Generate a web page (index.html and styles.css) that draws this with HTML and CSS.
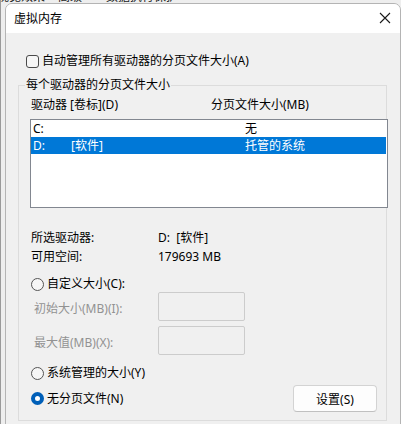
FILE: index.html
```html
<!DOCTYPE html>
<html lang="zh-CN">
<head>
<meta charset="utf-8">
<title>虚拟内存</title>
<link rel="stylesheet" href="styles.css">
</head>
<body>
<div class="desk">
  <div class="behind">
    <span class="bt bt1">视觉效果</span>
    <span class="bt bt2">高级</span>
    <span class="bt bt3">数据执行保护</span>
  </div>
  <div class="dialog">
    <div class="titlebar">
      <span class="title">虚拟内存</span>
      <svg class="close" width="12" height="12" viewBox="0 0 12 12"><path d="M1 1 L11 11 M11 1 L1 11" stroke="#1a1a1a" stroke-width="1.1" fill="none"/></svg>
    </div>
    <div class="body">
      <label class="check-row"><span class="checkbox"></span><span>自动管理所有驱动器的分页文件大小(A)</span></label>
      <div class="group">
        <span class="legend">每个驱动器的分页文件大小</span>
        <div class="headers"><span class="h1">驱动器 [卷标](D)</span><span>分页文件大小(MB)</span></div>
        <div class="list">
          <div class="row"><span class="c1">C:</span><span class="c2"></span><span class="c3">无</span></div>
          <div class="row sel"><span class="c1">D:</span><span class="c2">[软件]</span><span class="c3">托管的系统</span></div>
        </div>
        <div class="info"><span class="k">所选驱动器:</span><span>D:&nbsp;&nbsp;[软件]</span></div>
        <div class="info i2"><span class="k">可用空间:</span><span>179693 MB</span></div>
        <div class="radio-row r1"><span class="radio"></span><span>自定义大小(C):</span></div>
        <div class="field f1"><span class="flabel">初始大小(MB)(I):</span><span class="input"></span></div>
        <div class="field f2"><span class="flabel">最大值(MB)(X):</span><span class="input"></span></div>
        <div class="radio-row r3"><span class="radio"></span><span>系统管理的大小(Y)</span></div>
        <div class="last">
          <div class="radio-row"><span class="radio on"></span><span>无分页文件(N)</span></div>
          <button class="btn">设置(S)</button>
        </div>
      </div>
    </div>
  </div>
</div>
</body>
</html>
```

FILE: styles.css
```css
html, body {
  margin: 0;
  padding: 0;
}
body {
  width: 401px;
  height: 424px;
  overflow: hidden;
  background: #eeeeee;
  font-family: "Noto Sans", "Noto Sans CJK SC", sans-serif;
  font-size: 12px;
  line-height: 16px;
  color: #000;
}
.desk {
  position: relative;
  width: 401px;
  height: 424px;
  border-left: 1px solid #9a9a9a;
  box-sizing: border-box;
}
.behind {
  position: absolute;
  left: 0;
  top: 0;
  width: 401px;
  height: 6px;
  overflow: hidden;
}
.bt {
  position: absolute;
  top: -11px;
  font-size: 12px;
  color: #222;
}
.bt1 { left: -4px; }
.bt2 { left: 57px; }
.bt3 { left: 105px; }

.dialog {
  position: absolute;
  left: 4px;
  top: 3px;
  width: 394px;
  height: 430px;
  background: #f0f0f0;
  border: 1px solid #b4b4b4;
  border-radius: 7px 7px 0 0;
  overflow: hidden;
}
.titlebar {
  height: 29px;
  background: #ffffff;
  display: flex;
  align-items: center;
  justify-content: space-between;
  padding: 0 9px 0 8px;
}
.title {
  font-size: 12px;
}
.close {
  margin-top: -1px;
}
.body {
  padding: 20px 0 0 12px;
}
.check-row {
  display: flex;
  align-items: center;
  gap: 3px;
  height: 16px;
  margin-left: 8px;
}
.checkbox {
  width: 13px;
  height: 13px;
  box-sizing: border-box;
  border: 1px solid #4a4a4a;
  border-radius: 3px;
  background: #f6f6f6;
}
.group {
  position: relative;
  margin-top: 16px;
  width: 369px;
  height: 336px;
  box-sizing: border-box;
  border: 1px solid #dcdcdc;
  padding: 11px 9px 0 12px;
}
.legend {
  position: absolute;
  left: 6px;
  top: -9px;
  padding: 0 1px;
  background: #f0f0f0;
}
.headers {
  display: flex;
  height: 16px;
}
.h1 {
  width: 180px;
}
.list {
  margin: 6px 0 0 -1px;
  width: 358px;
  height: 89px;
  box-sizing: border-box;
  border: 1px solid #828790;
  background: #ffffff;
}
.row {
  display: flex;
  height: 17px;
  line-height: 17px;
  padding-left: 2px;
}
.row.sel {
  background: #0078d7;
  color: #ffffff;
  margin-right: 1px;
}
.c1 { width: 38px; }
.c2 { width: 174px; }
.info {
  display: flex;
  height: 16px;
  margin-top: 22px;
}
.info.i2 {
  margin-top: 3px;
}
.k {
  width: 127px;
}
.radio-row {
  display: flex;
  align-items: center;
  gap: 3px;
  height: 16px;
}
.radio-row.r1 { margin-top: 11px; }
.radio-row.r3 { margin-top: 10px; }
.radio {
  width: 13px;
  height: 13px;
  box-sizing: border-box;
  border: 1px solid #555555;
  border-radius: 50%;
  background: #f6f6f6;
}
.radio.on {
  border: 4px solid #005fb8;
  background: #ffffff;
}
.field {
  display: flex;
  align-items: center;
  height: 29px;
}
.field.f2 { margin-top: 5px; }
.flabel {
  width: 124px;
  padding-left: 3px;
  padding-top: 4px;
  color: #929292;
}
.input {
  width: 87px;
  height: 29px;
  box-sizing: border-box;
  border: 1px solid #cccccc;
  border-radius: 2px;
  background: #f0f0f0;
}
.last {
  display: flex;
  align-items: center;
  justify-content: space-between;
  height: 27px;
  margin-top: 4px;
}
.btn {
  width: 84px;
  height: 27px;
  box-sizing: border-box;
  border: 1px solid #d3d3d3;
  border-bottom-color: #c0c0c0;
  border-radius: 4px;
  background: #fdfdfd;
  font-family: "Noto Sans", "Noto Sans CJK SC", sans-serif;
  font-size: 12px;
  color: #000;
  padding: 0;
}
```
